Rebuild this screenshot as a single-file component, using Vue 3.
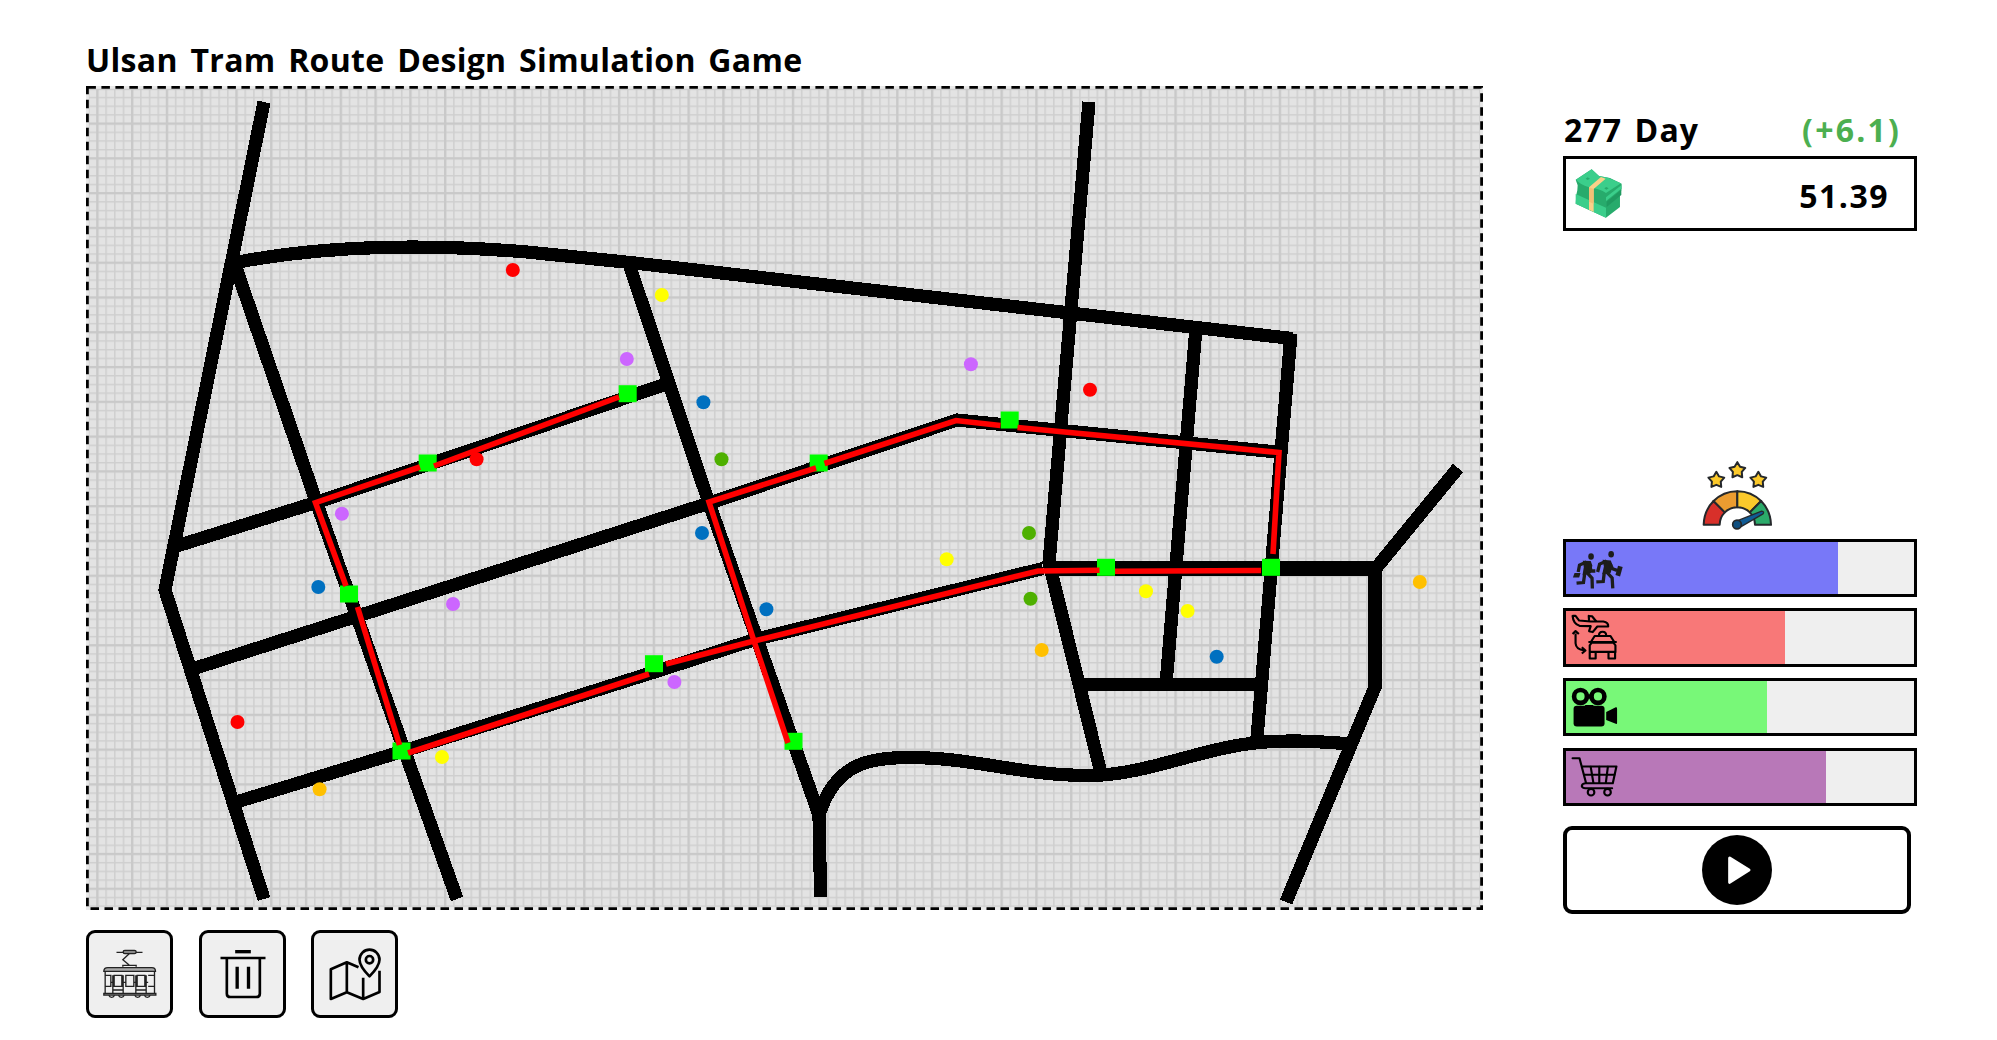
<script setup>
const roads = [
  'M264 102L165 590L264 899',
  'M233 263C330 244 430 244 527 252L630 262.5L1292 338.5',
  'M1291 334L1257 738',
  'M235 265L316 501L457 899',
  'M629 264L709 503L819 815L820.6 897',
  'M172 547.5L316 502.5L668 383.5',
  'M191 669.5L708 503.5L957 420L1282 452.5',
  'M238 801.5L402 751.5L659 670.5L755 639.5L1043 568.5',
  'M1377 567L1458 468',
  'M1375 565V687L1286 902',
  'M1089 102L1049 563L1101 773',
  'M1196 328L1166 684',
  'M1081 684.5H1262',
  'M819 815C835 764 868 757.5 909 757.5C975 757.5 1020 775.5 1089 775.5C1150 775.5 1210 743 1275 741.5C1310 739.5 1330 743.5 1352 743.5',
]

const routes = [
  'M619 397L434 466',
  'M420 467L315.5 502.7L346 586',
  'M357.5 607L399.5 745',
  'M408 753L649 674',
  'M666 664L754 641L1038 571L1099.5 570.3',
  'M1115 571.3L1261 570.5',
  'M1273 554L1279 452.5L1017.5 427.5',
  'M1000.5 425.5L956 420.5L824.5 463.5',
  'M816 468L709 502L754 641L788 743',
]

const stations = [
  [627.7, 393.7], [427.7, 463], [349, 594], [401.5, 751], [654, 663.7],
  [818.7, 463], [1009.7, 420], [1106, 567.3], [1271, 567.3], [793.5, 741.3],
]

const places = [
  ['#ff0000', [[512.8, 270], [476.6, 459.3], [237.5, 722], [1090, 389.7]]],
  ['#ffff00', [[661.8, 295], [442, 757], [946.7, 559.3], [1146, 591.3], [1187.6, 611]]],
  ['#cc66ff', [[626.8, 359], [341.9, 513.7], [453, 604], [674.4, 682], [970.9, 364.3]]],
  ['#0070c0', [[703.4, 402.3], [318.3, 587], [702, 533], [766.4, 609.3], [1216.7, 656.7]]],
  ['#4eb000', [[721.5, 459.3], [1029, 533], [1030.5, 598.7]]],
  ['#ffc000', [[319.6, 789.3], [1041.7, 650], [1419.8, 582]]],
]

const bars = [
  { name: 'commute', color: '#7878f8', value: 78.3, box: '48 273 174 159' },
  { name: 'transfer', color: '#f87878', value: 63, box: '48 482 174 159' },
  { name: 'leisure', color: '#78f878', value: 57.9, box: '48 30 174 159' },
  { name: 'shopping', color: '#b878b8', value: 74.7, box: '48 240 174 159' },
]

function star(cx, cy) {
  return Array.from({ length: 10 }, (_, i) => {
    const r = i % 2 ? 14 : 25
    const a = -Math.PI / 2 + (i * Math.PI) / 5
    return `${(cx + r * Math.cos(a)).toFixed(1)},${(cy + r * Math.sin(a)).toFixed(1)}`
  }).join(' ')
}
const stars = [star(498, 90), star(561, 61), star(624, 90)]

function sector(i) {
  const at = (r, a) => `${(561 + r * Math.cos(a)).toFixed(1)} ${(224 - r * Math.sin(a)).toFixed(1)}`
  const a = Math.PI - (i * Math.PI) / 4
  const b = a - Math.PI / 4
  return `M${at(53, a)}L${at(101, a)}A101 104 0 0 1 ${at(101, b)}L${at(53, b)}A53 53 0 0 0 ${at(53, a)}Z`
}
const sectors = ['#d8302a', '#eb9c30', '#fbc92b', '#2baa6a'].map((fill, i) => ({ fill, d: sector(i) }))
</script>

<template>
  <main class="game">
    <section class="field">
      <h1>Ulsan Tram Route Design Simulation Game</h1>
      <svg class="board" viewBox="86 86 1397 824">
        <defs>
          <pattern id="minor" x="96.6" y="88.1" width="8.695" height="8.695" patternUnits="userSpaceOnUse">
            <path d="M0 .8H8.7M.8 0V8.7" stroke="#cfcfcf" stroke-width="1.5" />
          </pattern>
          <pattern id="major" x="96.2" y="87.7" width="34.78" height="34.78" patternUnits="userSpaceOnUse">
            <path d="M0 1.2H34.8M1.2 0V34.8" stroke="#c9c9c9" stroke-width="2.3" />
          </pattern>
        </defs>
        <rect x="88" y="88" width="1393" height="820" fill="#e3e3e3" />
        <rect x="88" y="88" width="1393" height="820" fill="url(#minor)" />
        <rect x="88" y="88" width="1393" height="820" fill="url(#major)" />
        <rect class="edge-gap" x="87.4" y="87.4" width="1394.2" height="821.2" />
        <rect class="edge" x="87.4" y="87.4" width="1394.2" height="821.2" />
        <g class="roads">
          <path v-for="d in roads" :key="d" :d="d" />
          <path class="wide" d="M1045 568.3H1381.5" />
        </g>
        <g v-for="[color, points] in places" :key="color" :fill="color">
          <circle v-for="[x, y] in points" :key="`${x}-${y}`" :cx="x" :cy="y" r="7" />
        </g>
        <rect v-for="[x, y] in stations" :key="`${x}-${y}`" class="station" :x="x - 9" :y="y - 8.5" width="18" height="17" />
        <g class="routes">
          <path v-for="d in routes" :key="d" :d="d" />
        </g>
      </svg>
      <nav class="tools">
        <button aria-label="Tram">
          <svg class="tram" viewBox="38 36 242 246">
            <g fill="none" stroke="#222" stroke-width="4">
              <path d="M120 94H198M158 98L139 116L158 132M139 137V133H179V137" />
              <rect x="140" y="88" width="39" height="10" rx="5" fill="#888" />
              <path d="M82 151Q82 140 94 140H226Q237 140 237 151Z" fill="#a9a9a9" />
              <path d="M86 152V217M234 152V217M82 217H238V222H82ZM86 163H103V196H86M215 163H234V196H215M113 163H136V196H113ZM148 163H172V196H148ZM182 163H205V196H182ZM109 163V217M140 163V217M178 163V217M209 163V217M109 207H140M178 207H209M103 184H113M136 184H148M172 184H182M205 184H215" />
              <path d="M97 223A9 9 0 0 0 114 223M126 223A9 9 0 0 0 143 223M175 223A9 9 0 0 0 192 223M204 223A9 9 0 0 0 221 223" />
            </g>
          </svg>
        </button>
        <button aria-label="Delete">
          <svg viewBox="377 36 242 246">
            <g fill="none" stroke="#000" stroke-width="8">
              <path d="M476 92H523" stroke-width="10" />
              <path d="M432 111H567M451 112V218Q451 228 462 228H539Q550 228 550 218V112" />
              <path d="M482 137V203M516 137V203" stroke-width="10" />
            </g>
          </svg>
        </button>
        <button aria-label="Map">
          <svg viewBox="715 36 242 246">
            <g fill="none" stroke="#000" stroke-width="8" stroke-linejoin="round">
              <path d="M848 139L813 124L765 145V234L813 214L862 234L911 213V149M813 124V214M862 170V234" />
              <path d="M881 166Q851 135 851 116A30 30 0 0 1 911 116Q911 135 881 166Z" />
              <circle cx="881" cy="116" r="11" />
            </g>
          </svg>
        </button>
      </nav>
    </section>

    <aside class="panel">
      <header class="day">
        <span>277 Day</span>
        <span class="gain">(+6.1)</span>
      </header>
      <div class="money">
        <svg viewBox="75 205 142 150">
          <path fill="#27ab6c" d="M77 240L125 209L147 229L180 235L215 252V268L210 286V322L168 354L77 312L79 285L82 272L83 257Z" />
          <path fill="#3bce8b" d="M77 283L168 324V354L77 312Z" />
          <path fill="#1f9a60" d="M170 306L214 270V286L170 322Z" />
          <path fill="#3bce8b" d="M78 240L125 209L147 229L174 234L213 251Q190 266 168 280Q150 268 118 263Q92 256 78 240Z" />
          <path fill="#3bce8b" d="M168 293L214 257V267L168 304Z" />
          <path fill="#27ab6c" d="M107 237L113 233L120 237L113 241ZM163 266L169 262L176 266L169 270Z" />
          <path fill="#fbd089" d="M117 263L153 232L167 237L131 268V337L117 330Z" />
          <path fill="#f3c076" d="M117 263L131 268V312L117 306Z" />
        </svg>
        <span>51.39</span>
      </div>

      <svg class="gauge" viewBox="455 30 210 212">
        <g stroke="#25282b" stroke-width="6" stroke-linejoin="round">
          <polygon v-for="s in stars" :key="s" :points="s" fill="#fbc92b" />
          <path v-for="s in sectors" :key="s.fill" :d="s.d" :fill="s.fill" />
          <path d="M558 213L634 183Q643 184 638 191L571 230Z" fill="#105b95" stroke-width="4" />
          <circle cx="560" cy="223" r="13" fill="#0f4f80" stroke-width="5" />
        </g>
      </svg>

      <div class="bars">
        <div v-for="bar in bars" :key="bar.name" class="bar">
          <div class="fill" :style="{ width: bar.value + '%', background: bar.color }">
            <svg :viewBox="bar.box">
              <g v-if="bar.name === 'commute'" fill="none" stroke="#1d1d1b" stroke-width="10">
                <g fill="#1d1d1b" stroke="none">
                  <ellipse cx="123" cy="317" rx="8.5" ry="10" />
                  <ellipse cx="184" cy="310" rx="8.5" ry="10" />
                  <path d="M98 330L122 331L127 344L122 368L97 374L101 350Z" />
                  <path d="M158 327L183 329L188 343L183 366L157 371L162 347Z" />
                  <path d="M73 367L91 367L87 381L68 381Z" />
                  <path d="M205 345L219 349L211 378L197 373Z" />
                </g>
                <path d="M109 334L88 343L84 364M119 342L123 361H136M110 365L126 383L127 414M104 368L100 396L79 398" />
                <path d="M170 331L149 340L143 364M181 339L188 354L202 359M170 364L187 382L189 414M163 367L160 393L139 394" />
              </g>
              <g v-else-if="bar.name === 'transfer'" fill="none" stroke="#000" stroke-width="6.5" stroke-linejoin="round">
                <path d="M67 497H76L87 511L122 514H160Q176 517 175 529H142L128 546L117 543L122 528L88 527Q69 521 67 497Z" />
                <path d="M117 512L116 497L126 498L139 514" />
                <path d="M76 550V580Q77 599 103 602M67 552L76 543L86 552M95 592L106 602L95 611" />
                <path d="M147 557Q147 545 158 545Q169 545 169 557M122 577L134 558H182L194 577M119 609V586L125 578H191L197 586V609M119 606H197M119 609V626H137V609M176 609V626H196V609M115 576H201" />
              </g>
              <g v-else-if="bar.name === 'leisure'">
                <g fill="none" stroke="#000" stroke-width="14">
                  <circle cx="91" cy="77" r="19.5" />
                  <circle cx="144" cy="77" r="19.5" />
                </g>
                <path d="M110 70H125V84H110ZM105 103H130V110H105ZM169 124L198 110Q202 109 202 114V157Q202 162 198 160L169 148Z" />
                <rect x="70" y="105" width="94" height="63" rx="10" />
              </g>
              <g v-else fill="none" stroke="#000" stroke-width="6.5" stroke-linecap="round" stroke-linejoin="round">
                <path d="M67 262H88L108 338H189L200 287H97M106 338Q95 339 95 347Q97 353 106 353H187" />
                <path d="M102 312H194M122 288L130 336M148 288V336M174 288L168 336" />
                <circle cx="123" cy="365" r="10" />
                <circle cx="173" cy="365" r="10" />
              </g>
            </svg>
          </div>
        </div>
      </div>

      <button class="play" aria-label="Play">
        <svg viewBox="456 494 210 210">
          <circle cx="561" cy="599" r="105" />
          <path d="M539 563L597 599L539 636Z" fill="#fff" stroke="#fff" stroke-width="9" stroke-linejoin="round" />
        </svg>
      </button>
    </aside>
  </main>
</template>

<style>
body {
  background: #fff;
}
</style>

<style scoped>
.game {
  display: flex;
  box-sizing: border-box;
  width: 1997px;
  height: 1040px;
  padding-left: 86px;
  gap: 80px;
  overflow: hidden;
  color: #000;
  font-family: "Open Sans", "Noto Sans", sans-serif;
  font-weight: 700;
}
.field {
  width: 1397px;
}
h1 {
  height: 51px;
  margin: 0;
  padding-top: 35px;
  font-size: 32px;
  font-weight: 700;
  line-height: 50px;
  letter-spacing: 0.32px;
  word-spacing: 4px;
  white-space: nowrap;
}
.board {
  display: block;
  width: 1397px;
  height: 824px;
}
.edge,
.edge-gap {
  fill: none;
  stroke: #e9e9e9;
  stroke-width: 2.8;
}
.edge {
  stroke: #000;
  stroke-dasharray: 8.5 5.5;
}
.roads path {
  fill: none;
  stroke: #000;
  stroke-width: 13.2;
  shape-rendering: crispEdges;
}
.roads .wide {
  stroke-width: 15;
}
.routes path {
  fill: none;
  stroke: #f00;
  stroke-width: 5.6;
}
.station {
  fill: #0f0;
}
.tools {
  display: flex;
  gap: 25.6px;
  margin-top: 19.5px;
}
button {
  box-sizing: border-box;
  padding: 0;
}
.tools button {
  width: 87px;
  height: 88px;
  border: 3px solid #000;
  border-radius: 9px;
  background: #efefef;
}
.tools svg {
  display: block;
  width: 100%;
  height: 100%;
}
.panel {
  width: 354px;
}
.day {
  display: flex;
  justify-content: space-between;
  box-sizing: border-box;
  height: 156px;
  padding: 105px 16px 0 1px;
  font-size: 32px;
  line-height: 50px;
  letter-spacing: 1.1px;
  word-spacing: 3px;
}
.gain {
  color: #4caf50;
  letter-spacing: 2.2px;
}
.money {
  display: flex;
  align-items: center;
  justify-content: space-between;
  box-sizing: border-box;
  height: 75px;
  padding: 0 25px 0 9px;
  border: 3px solid #000;
  font-size: 32px;
  letter-spacing: 1.5px;
}
.money span {
  padding-top: 4px;
}
.money svg {
  width: 47.3px;
  height: 50px;
  margin-bottom: 1px;
}
.gauge {
  display: block;
  width: 70px;
  height: 71px;
  margin: 229px 0 7.5px 138.7px;
}
.bars {
  display: flex;
  flex-direction: column;
  gap: 11.3px;
}
.bar {
  box-sizing: border-box;
  height: 58.4px;
  border: 3px solid #000;
  background: #efefef;
}
.fill {
  height: 100%;
}
.fill svg {
  display: block;
  width: 58px;
  height: 52.4px;
}
.play {
  display: flex;
  align-items: center;
  justify-content: center;
  width: 348px;
  height: 88px;
  margin-top: 19.6px;
  border: 4px solid #000;
  border-radius: 9px;
  background: #fff;
}
.play svg {
  width: 70px;
  height: 70px;
}
</style>
